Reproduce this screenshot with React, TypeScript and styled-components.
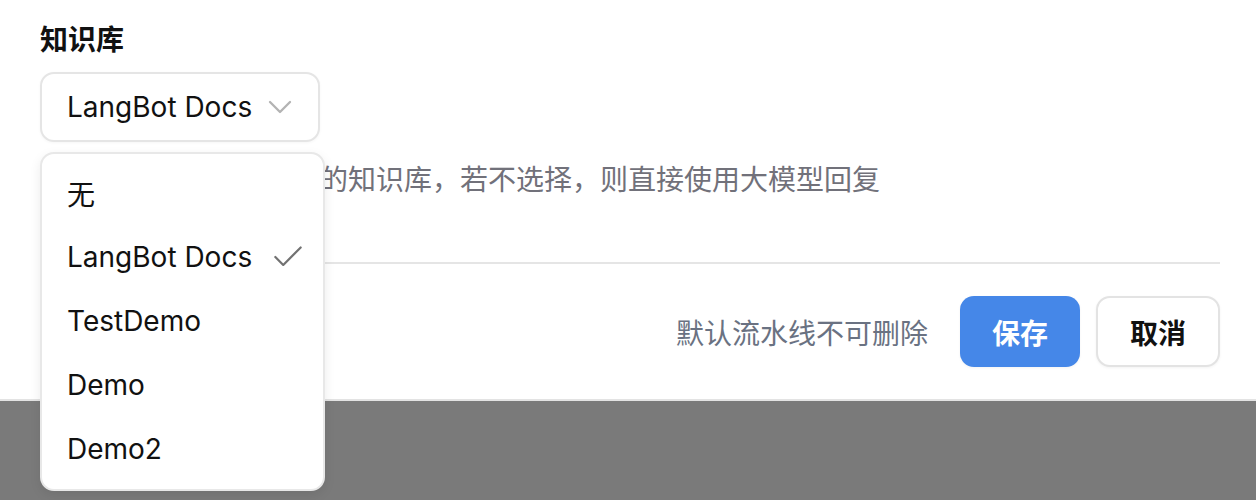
import styled, { createGlobalStyle } from "styled-components";
import { Check, ChevronDown } from "lucide-react";

const GlobalStyle = createGlobalStyle`
  html, body {
    margin: 0;
    padding: 0;
    background: #7a7a7a;
  }
  body {
    font-family: "Inter", "Noto Sans CJK SC", sans-serif;
    -webkit-font-smoothing: antialiased;
  }
`;

const knowledgeBases = ["无", "LangBot Docs", "TestDemo", "Demo", "Demo2"];

export default function App() {
  const selected = "LangBot Docs";

  return (
    <Page>
      <GlobalStyle />
      <Panel>
        <Field>
          <Label>知识库</Label>
          <SelectWrap>
            <Trigger type="button">
              <span>{selected}</span>
              <ChevronDown size={40} strokeWidth={1.4} color="#b3b3b3" />
            </Trigger>
            <Menu>
              {knowledgeBases.map((kb) => (
                <MenuItem key={kb}>
                  <span>{kb}</span>
                  {kb === selected && (
                    <Check size={38} strokeWidth={1.4} color="#727272" />
                  )}
                </MenuItem>
              ))}
            </Menu>
          </SelectWrap>
          <Description>
            选择此流水线需要使用的知识库，若不选择，则直接使用大模型回复
          </Description>
        </Field>
        <Divider />
        <Footer>
          <Note>默认流水线不可删除</Note>
          <Button $primary>保存</Button>
          <Button>取消</Button>
        </Footer>
      </Panel>
    </Page>
  );
}

const Page = styled.div`
  min-height: 500px;
  background: #7a7a7a;
`;

const Panel = styled.div`
  position: relative;
  z-index: 1;
  background: #fff;
  height: 401px;
  box-sizing: border-box;
  padding: 19px 36px 0 40px;
  border-bottom: 2px solid #e3e3e3;
  display: flex;
  flex-direction: column;
`;

const Field = styled.div`
  display: flex;
  flex-direction: column;
  align-items: flex-start;
`;

const Label = styled.div`
  font-size: 28px;
  line-height: 42px;
  font-weight: 600;
  color: #111;
`;

const SelectWrap = styled.div`
  position: relative;
  margin-top: 11px;
`;

const Trigger = styled.button`
  width: 280px;
  height: 70px;
  box-sizing: border-box;
  display: flex;
  align-items: center;
  justify-content: space-between;
  padding: 0 18px 0 25px;
  background: #fff;
  border: 2px solid #e5e5e5;
  border-radius: 14px;
  box-shadow: 0 1px 3px rgba(0, 0, 0, 0.04);
  font-family: inherit;
  font-size: 28px;
  color: #111;
  cursor: pointer;
`;

const Menu = styled.div`
  position: absolute;
  top: 80px;
  left: 0;
  width: 285px;
  box-sizing: border-box;
  padding: 7px 0 8px;
  background: #fff;
  border: 2px solid #e8e8e8;
  border-radius: 14px;
  box-shadow: 0 4px 12px rgba(0, 0, 0, 0.08);
  z-index: 10;
`;

const MenuItem = styled.div`
  height: 64px;
  display: flex;
  align-items: center;
  justify-content: space-between;
  padding: 0 16px 0 25px;
  font-size: 28px;
  color: #111;
`;

const Description = styled.div`
  margin-top: 18px;
  font-size: 28px;
  line-height: 40px;
  color: #71717a;
`;

const Divider = styled.div`
  margin-top: 62px;
  height: 2px;
  background: #e5e5e5;
`;

const Footer = styled.div`
  display: flex;
  align-items: center;
  justify-content: flex-end;
  gap: 16px;
  padding-top: 32px;
`;

const Note = styled.span`
  font-size: 28px;
  color: #6a7282;
  margin-right: 16px;
`;

const Button = styled.button<{ $primary?: boolean }>`
  height: 71px;
  padding: 0 32px;
  box-sizing: border-box;
  border-radius: 14px;
  font-family: inherit;
  font-size: 28px;
  font-weight: 600;
  cursor: pointer;
  background: ${(p) => (p.$primary ? "#4587e8" : "#fff")};
  color: ${(p) => (p.$primary ? "#fff" : "#111")};
  border: ${(p) => (p.$primary ? "none" : "2px solid #e3e3e3")};
  box-shadow: 0 1px 3px rgba(0, 0, 0, 0.05);
`;
